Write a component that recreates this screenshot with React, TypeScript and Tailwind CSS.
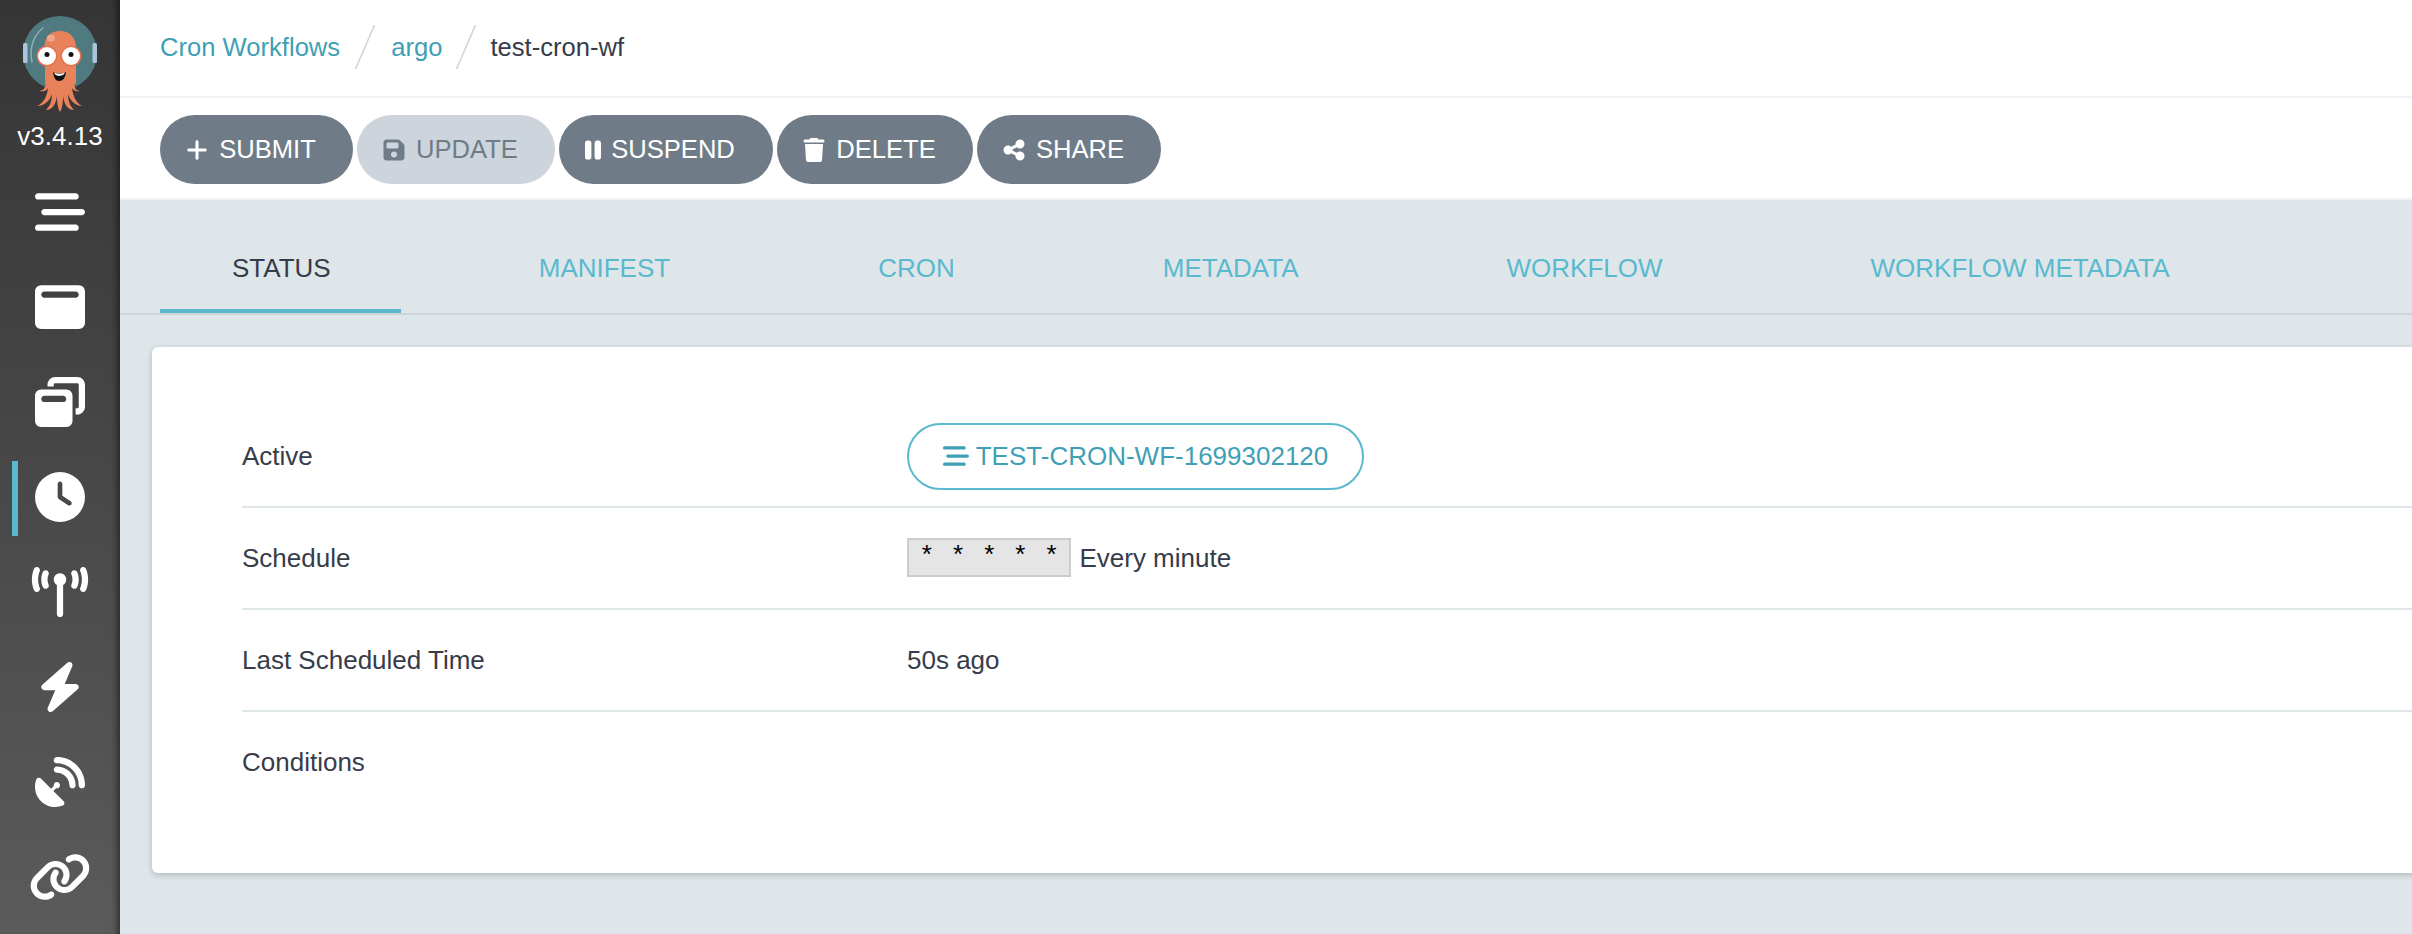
import { FaBarsStaggered, FaWindowMaximize, FaWindowRestore, FaClock, FaTowerBroadcast, FaBolt, FaSatelliteDish, FaLink, FaPlus, FaFloppyDisk, FaPause, FaTrash, FaShareNodes } from 'react-icons/fa6';

const navIcons = [
  { icon: FaBarsStaggered, size: 'w-[50px] h-[50px]' },
  { icon: FaWindowMaximize, size: 'w-[50px] h-[50px]' },
  { icon: FaWindowRestore, size: 'w-[50px] h-[50px]' },
  { icon: FaClock, size: 'w-[50px] h-[50px]', active: true },
  { icon: FaTowerBroadcast, size: 'w-[62px] h-[50px]' },
  { icon: FaBolt, size: 'w-[50px] h-[50px]' },
  { icon: FaSatelliteDish, size: 'w-[50px] h-[50px]' },
  { icon: FaLink, size: 'w-[62px] h-[50px]' },
];

const actions = [
  { label: 'SUBMIT', icon: FaPlus, width: 'w-[193px]', iconSize: 'w-[24px] h-[24px]' },
  { label: 'UPDATE', icon: FaFloppyDisk, width: 'w-[198px]', iconSize: 'w-[24px] h-[24px]', disabled: true },
  { label: 'SUSPEND', icon: FaPause, width: 'w-[214px]', iconSize: 'w-[16px] h-[26px]' },
  { label: 'DELETE', icon: FaTrash, width: 'w-[196px]', iconSize: 'w-[24px] h-[24px]' },
  { label: 'SHARE', icon: FaShareNodes, width: 'w-[184px]', iconSize: 'w-[24px] h-[24px]' },
];

const tabs = ['STATUS', 'MANIFEST', 'CRON', 'METADATA', 'WORKFLOW', 'WORKFLOW METADATA'];

function Logo() {
  return (
    <svg viewBox="0 0 120 120" className="w-[120px] h-[120px]">
      <circle cx="60" cy="53" r="37" fill="#4f7a80" />
      <rect x="23" y="43" width="4.5" height="20" rx="1.5" fill="#a9c4dc" />
      <rect x="92.5" y="43" width="4.5" height="20" rx="1.5" fill="#a9c4dc" />
      <path d="M32 62 C29 47 34 35 43 28" fill="none" stroke="#8fb0b3" strokeWidth="1.5" strokeLinecap="round" />
      <path d="M45 84 V50 C43 38 50 31 60 31 C70 31 77 38 76 50 V84 Z" fill="#e8825a" />
      <ellipse cx="51" cy="38" rx="4" ry="3.5" fill="#f2a68a" />
      <path d="M46 82 C45 90 43 90 39 91 C45 92 47 90 48 88 C47 96 44 103 37 106 C45 106 50 100 52 94 C52 102 49 107 46 110 C53 110 56 103 57 96 C57 103 58 109 60 112 C62 109 63 103 63 96 C64 103 67 110 74 110 C71 107 68 102 68 94 C70 100 75 106 82 106 C76 103 73 96 72 88 C73 90 76 92 80 91 C76 90 75 90 74 82 Z" fill="#e8825a" />
      <circle cx="47" cy="56" r="10.5" fill="#e8704f" />
      <circle cx="47" cy="56" r="9" fill="#fff" />
      <circle cx="47" cy="54.5" r="2.5" fill="#111" />
      <circle cx="71" cy="56" r="10.5" fill="#e8704f" />
      <circle cx="71" cy="56" r="9" fill="#fff" />
      <circle cx="71" cy="54.5" r="2.5" fill="#111" />
      <path d="M53 72 Q59 75 66 72 Q65 81 59 81 Q54 81 53 72 Z" fill="#111" />
      <path d="M54 72.5 Q59 75 65 72.5 Q64 75.5 59 76 Q55 75.5 54 72.5 Z" fill="#fff" />
    </svg>
  );
}

function Slash({ className }: { className: string }) {
  return (
    <svg viewBox="0 0 20 44" className={`w-[20px] h-[44px] ${className}`}>
      <line x1="19.5" y1="0" x2="0.5" y2="44" stroke="#cdd4db" strokeWidth="1.5" />
    </svg>
  );
}

export default function App() {
  return (
    <div className="flex h-[934px] w-[2412px] overflow-hidden font-['Liberation_Sans',Arial,sans-serif] text-[26px] text-[#363c4a]">
      {/* sidebar */}
      <div className="w-[120px] shrink-0 flex flex-col bg-gradient-to-b from-[#353535] to-[#5b5b5b] shadow-[inset_-7px_0_6px_-4px_rgba(0,0,0,0.45)]">
        <Logo />
        <div className="text-center text-white leading-[30px] mt-[1px] mb-[13px]">v3.4.13</div>
        {navIcons.map(({ icon: Icon, size, active }, i) => (
          <div key={i} className="relative h-[95px] flex items-center justify-center text-white">
            {active && <div className="absolute left-[12px] top-[12px] w-[6px] h-[75px] bg-[#5ab9cf]" />}
            <Icon className={size} />
          </div>
        ))}
      </div>

      {/* main */}
      <div className="flex-1 min-w-0 flex flex-col bg-[#dee6e9]">
        <div className="h-[98px] shrink-0 bg-white border-b-2 border-[#eff3f5] flex items-center pl-[40px] pb-[2px] text-[25.6px]">
          <a className="text-[#3f9fb5]">Cron Workflows</a>
          <Slash className="ml-[15px] mr-[16px]" />
          <a className="text-[#3f9fb5]">argo</a>
          <Slash className="ml-[14px] mr-[14px]" />
          <span>test-cron-wf</span>
        </div>

        <div className="h-[102px] shrink-0 bg-white border-b-2 border-[#eff3f5] flex items-center pl-[40px] gap-[4px] pt-[3px] text-[25.6px]">
          {actions.map(({ label, icon: Icon, width, iconSize, disabled }) => (
            <button
              key={label}
              className={`${width} h-[69px] rounded-full flex items-center justify-center gap-[10px] pr-[12px] ${disabled ? 'bg-[#cdd4db] text-[#6f7c88]' : 'bg-[#6f7c88] text-white'}`}
            >
              <Icon className={iconSize} />
              {label}
            </button>
          ))}
        </div>

        <div className="h-[115px] shrink-0 border-b-2 border-[#ccd4d9] flex pl-[40px]">
          {tabs.map((t, i) => (
            <div
              key={t}
              className={`h-[113px] pl-[72px] pt-[28px] flex items-center border-b-4 ${i === 0 ? 'pr-[70px] mr-[66px] border-[#5ab9cf] text-[#363c4a]' : 'pr-[72px] mr-[64px] border-transparent text-[#5ab9cf]'}`}
            >
              {t}
            </div>
          ))}
        </div>

        <div className="mt-[32px] ml-[32px] -mr-[200px] h-[526px] shrink-0 bg-white rounded-[6px] shadow-[0_2px_6px_rgba(0,0,0,0.2)] px-[90px] py-[59px]">
          <div className="h-[102px] flex items-center border-b-2 border-[#dee6e9]">
            <div className="w-[665px]">Active</div>
            <a className="w-[457px] h-[67px] rounded-full border-2 border-[#5ab9cf] text-[#3f9fb5] flex items-center justify-center gap-[7px]">
              <FaBarsStaggered className="w-[26px] h-[26px]" />
              TEST-CRON-WF-1699302120
            </a>
          </div>
          <div className="h-[102px] flex items-center border-b-2 border-[#dee6e9]">
            <div className="w-[665px]">Schedule</div>
            <code className="font-['Liberation_Mono',monospace] bg-[#e5e5e5] border-2 border-[#cccccc] text-black px-[10px] h-[39px] -mt-[2px] flex items-center whitespace-pre">* * * * *</code>
            <span className="ml-[8px]">Every minute</span>
          </div>
          <div className="h-[102px] flex items-center border-b-2 border-[#dee6e9]">
            <div className="w-[665px]">Last Scheduled Time</div>
            <div>50s ago</div>
          </div>
          <div className="h-[102px] flex items-center pb-[2px]">
            <div className="w-[665px]">Conditions</div>
          </div>
        </div>
      </div>
    </div>
  );
}
